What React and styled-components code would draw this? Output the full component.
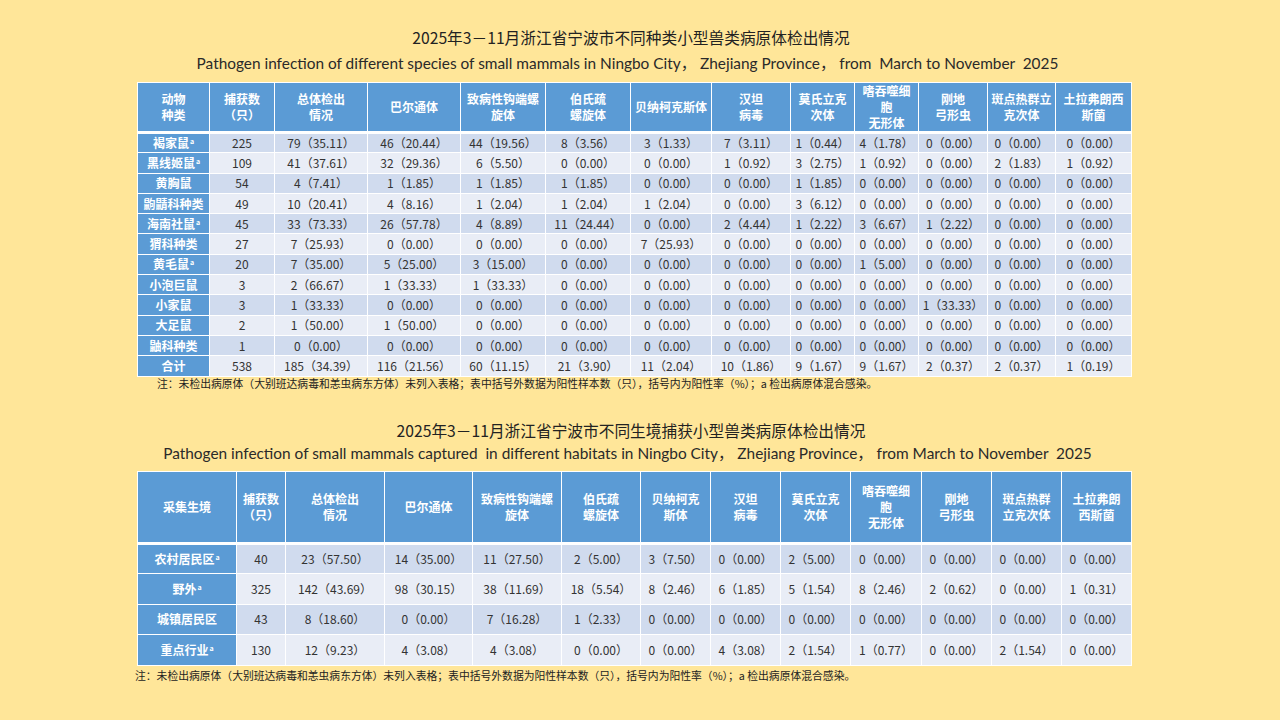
import React from "react";
import styled, { createGlobalStyle } from "styled-components";

const GlobalStyle = createGlobalStyle`
  html, body {
    margin: 0;
    padding: 0;
    background: #ffe699;
  }
  body {
    font-family: "Noto Sans CJK SC", "Noto Sans", sans-serif;
    color: #333;
  }
`;

const Page = styled.div`
  width: 1280px;
  height: 720px;
  box-sizing: border-box;
  padding: 28px 0 0 137px;
  display: flex;
  flex-direction: column;
`;

const Section = styled.section`
  width: 994px;
  display: flex;
  flex-direction: column;
  margin-top: ${(props) => props.$top || 0}px;
`;

const TitleZh = styled.h2`
  margin: 0;
  padding-right: 6px;
  font-size: 15.7px;
  font-weight: 400;
  line-height: 20px;
  text-align: center;
  color: #222;
`;

const TitleEn = styled.h3`
  margin: ${(props) => props.$gap}px 0 0;
  padding-right: 13px;
  font-family: "Lato", "Noto Sans", "Noto Sans CJK SC", sans-serif;
  font-size: 15.4px;
  font-weight: 400;
  line-height: 20px;
  text-align: center;
  color: #2a2a2a;
  white-space: pre;
`;

const Table = styled.table`
  margin-top: ${(props) => props.$gap}px;
  width: 994px;
  table-layout: fixed;
  border-collapse: collapse;
  font-size: 12px;
`;

const HeadCell = styled.th`
  height: ${(props) => props.$h}px;
  padding: 0 2px;
  background: #5b9bd5;
  color: #fff;
  font-weight: 700;
  line-height: 16px;
  text-align: center;
  vertical-align: middle;
  border: 1px solid #fff;
  border-bottom-width: 3px;
  white-space: pre-line;
`;

const Row = styled.tr`
  height: ${(props) => props.$h}px;
  background: ${(props) => (props.$odd ? "#d0dbee" : "#e9edf6")};
`;

const NameCell = styled.td`
  padding: 0;
  background: #5b9bd5;
  color: #fff;
  font-weight: 700;
  text-align: center;
  line-height: 16px;
  border: 1px solid #fff;
`;

const Cell = styled.td`
  padding: 0;
  text-align: center;
  line-height: 16px;
  color: #333;
  border: 1px solid #fff;
  white-space: nowrap;
`;

const Sup = styled.sup`
  font-size: 7px;
  line-height: 0;
  margin-left: 1px;
  vertical-align: 4px;
`;

const Note = styled.p`
  margin: ${(props) => props.$top}px 0 0 ${(props) => props.$left}px;
  font-size: 10.8px;
  line-height: 12px;
  color: #222;
  white-space: nowrap;
`;

const z = "0（0.00）";

const speciesHead = [
  "动物\n种类",
  "捕获数\n（只）",
  "总体检出\n情况",
  "巴尔通体",
  "致病性钩端螺\n旋体",
  "伯氏疏\n螺旋体",
  "贝纳柯克斯体",
  "汉坦\n病毒",
  "莫氏立克\n次体",
  "嗜吞噬细\n胞\n无形体",
  "刚地\n弓形虫",
  "斑点热群立\n克次体",
  "土拉弗朗西\n斯菌",
];
const speciesCols = [72, 65, 93, 93, 85, 85, 81, 79, 64, 64, 69, 68, 76];

const species = [
  { name: "褐家鼠", a: true, cells: ["225", "79（35.11）", "46（20.44）", "44（19.56）", "8（3.56）", "3（1.33）", "7（3.11）", "1（0.44）", "4（1.78）", z, z, z] },
  { name: "黑线姬鼠", a: true, cells: ["109", "41（37.61）", "32（29.36）", "6（5.50）", z, z, "1（0.92）", "3（2.75）", "1（0.92）", z, "2（1.83）", "1（0.92）"] },
  { name: "黄胸鼠", cells: ["54", "4（7.41）", "1（1.85）", "1（1.85）", "1（1.85）", z, z, "1（1.85）", z, z, z, z] },
  { name: "鼩鼱科种类", cells: ["49", "10（20.41）", "4（8.16）", "1（2.04）", "1（2.04）", "1（2.04）", z, "3（6.12）", z, z, z, z] },
  { name: "海南社鼠", a: true, cells: ["45", "33（73.33）", "26（57.78）", "4（8.89）", "11（24.44）", z, "2（4.44）", "1（2.22）", "3（6.67）", "1（2.22）", z, z] },
  { name: "猬科种类", cells: ["27", "7（25.93）", z, z, z, "7（25.93）", z, z, z, z, z, z] },
  { name: "黄毛鼠", a: true, cells: ["20", "7（35.00）", "5（25.00）", "3（15.00）", z, z, z, z, "1（5.00）", z, z, z] },
  { name: "小泡巨鼠", cells: ["3", "2（66.67）", "1（33.33）", "1（33.33）", z, z, z, z, z, z, z, z] },
  { name: "小家鼠", cells: ["3", "1（33.33）", z, z, z, z, z, z, z, "1（33.33）", z, z] },
  { name: "大足鼠", cells: ["2", "1（50.00）", "1（50.00）", z, z, z, z, z, z, z, z, z] },
  { name: "鼬科种类", cells: ["1", z, z, z, z, z, z, z, z, z, z, z] },
  { name: "合计", cells: ["538", "185（34.39）", "116（21.56）", "60（11.15）", "21（3.90）", "11（2.04）", "10（1.86）", "9（1.67）", "9（1.67）", "2（0.37）", "2（0.37）", "1（0.19）"] },
];

const habitatHead = [
  "采集生境",
  "捕获数\n（只）",
  "总体检出\n情况",
  "巴尔通体",
  "致病性钩端螺\n旋体",
  "伯氏疏\n螺旋体",
  "贝纳柯克\n斯体",
  "汉坦\n病毒",
  "莫氏立克\n次体",
  "嗜吞噬细\n胞\n无形体",
  "刚地\n弓形虫",
  "斑点热群\n立克次体",
  "土拉弗朗\n西斯菌",
];
const habitatCols = [99, 49, 99, 88, 89, 79, 70, 70, 70, 71, 70, 70, 70];

const habitats = [
  { name: "农村居民区", a: true, cells: ["40", "23（57.50）", "14（35.00）", "11（27.50）", "2（5.00）", "3（7.50）", z, "2（5.00）", z, z, z, z] },
  { name: "野外", a: true, cells: ["325", "142（43.69）", "98（30.15）", "38（11.69）", "18（5.54）", "8（2.46）", "6（1.85）", "5（1.54）", "8（2.46）", "2（0.62）", z, "1（0.31）"] },
  { name: "城镇居民区", cells: ["43", "8（18.60）", z, "7（16.28）", "1（2.33）", z, z, z, z, z, z, z] },
  { name: "重点行业", a: true, cells: ["130", "12（9.23）", "4（3.08）", "4（3.08）", z, z, "4（3.08）", "2（1.54）", "1（0.77）", z, "2（1.54）", z] },
];

const note =
  "注：未检出病原体（大别班达病毒和恙虫病东方体）未列入表格；表中括号外数据为阳性样本数（只），括号内为阳性率（%）；a 检出病原体混合感染。";

const DataTable = ({ head, cols, rows, headHeight, rowHeight, gap }) => (
  <Table $gap={gap}>
    <colgroup>
      {cols.map((w, i) => (
        <col key={i} style={{ width: w }} />
      ))}
    </colgroup>
    <thead>
      <tr>
        {head.map((h) => (
          <HeadCell key={h} $h={headHeight}>
            {h}
          </HeadCell>
        ))}
      </tr>
    </thead>
    <tbody>
      {rows.map((row, i) => (
        <Row key={row.name} $odd={i % 2 === 0} $h={rowHeight}>
          <NameCell>
            {row.name}
            {row.a && <Sup>a</Sup>}
          </NameCell>
          {row.cells.map((c, j) => (
            <Cell key={j}>{c}</Cell>
          ))}
        </Row>
      ))}
    </tbody>
  </Table>
);

const App = () => {
  return (
    <>
      <GlobalStyle />
      <Page>
        <Section>
          <TitleZh>2025年3－11月浙江省宁波市不同种类小型兽类病原体检出情况</TitleZh>
          <TitleEn $gap={5}>
            Pathogen infection of different species of small mammals in Ningbo City， Zhejiang Province， from  March to November  2025
          </TitleEn>
          <DataTable
            head={speciesHead}
            cols={speciesCols}
            rows={species}
            headHeight={46}
            rowHeight={20.3}
            gap={9}
          />
          <Note $top={0} $left={20}>
            {note}
          </Note>
        </Section>
        <Section $top={32}>
          <TitleZh>2025年3－11月浙江省宁波市不同生境捕获小型兽类病原体检出情况</TitleZh>
          <TitleEn $gap={2}>
            Pathogen infection of small mammals captured  in different habitats in Ningbo City， Zhejiang Province， from March to November  2025
          </TitleEn>
          <DataTable
            head={habitatHead}
            cols={habitatCols}
            rows={habitats}
            headHeight={70}
            rowHeight={30.5}
            gap={8}
          />
          <Note $top={3} $left={-2}>
            {note}
          </Note>
        </Section>
      </Page>
    </>
  );
};

export default App;
